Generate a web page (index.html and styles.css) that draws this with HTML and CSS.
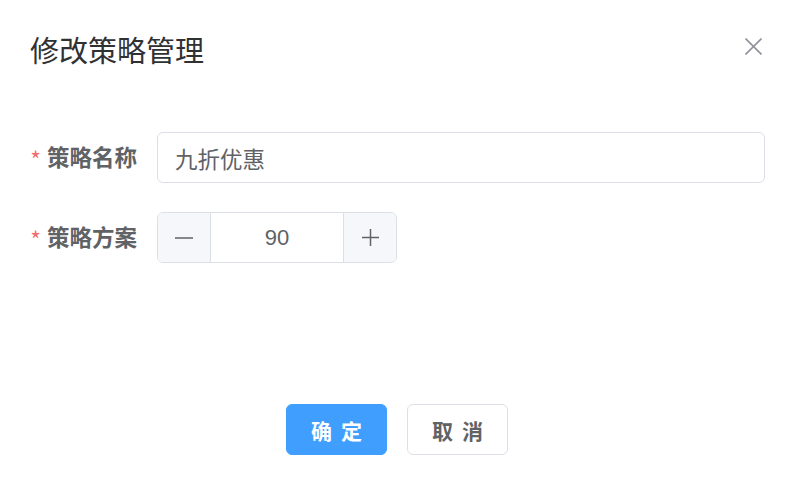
FILE: index.html
```html
<!DOCTYPE html>
<html lang="zh">
<head>
<meta charset="utf-8">
<title>修改策略管理</title>
<link rel="stylesheet" href="styles.css">
</head>
<body>
<div class="dialog">
  <div class="header">
    <span class="title">修改策略管理</span>
    <button class="close" aria-label="关闭">
      <svg width="17" height="17" viewBox="0 0 17 17"><path d="M0.5 0.5 L16.5 16.5 M16.5 0.5 L0.5 16.5" stroke="#909399" stroke-width="1.6" fill="none"/></svg>
    </button>
  </div>
  <div class="body">
    <div class="row">
      <label class="label"><span class="req">*</span>策略名称</label>
      <div class="input">九折优惠</div>
    </div>
    <div class="row">
      <label class="label"><span class="req">*</span>策略方案</label>
      <div class="number">
        <span class="step minus"><svg width="18" height="2" viewBox="0 0 18 2"><path d="M0 1 H18" stroke="#606266" stroke-width="1.6"/></svg></span>
        <span class="value">90</span>
        <span class="step plus"><svg width="17" height="17" viewBox="0 0 17 17"><path d="M0 8.5 H17 M8.5 0 V17" stroke="#606266" stroke-width="1.5"/></svg></span>
      </div>
    </div>
  </div>
  <div class="footer">
    <button class="btn primary">确&nbsp;定</button>
    <button class="btn">取&nbsp;消</button>
  </div>
</div>
</body>
</html>
```
FILE: styles.css
```css
html, body {
  margin: 0;
  padding: 0;
  background: #ffffff;
}
body {
  font-family: "Liberation Sans", "Noto Sans CJK SC", sans-serif;
  color: #606266;
}
.dialog {
  width: 797px;
  height: 477px;
  box-sizing: border-box;
}
.header {
  display: flex;
  justify-content: space-between;
  align-items: center;
  padding: 32px 35px 0 30px;
  height: 34px;
}
.title {
  font-family: "Noto Sans CJK SC", sans-serif;
  font-size: 29px;
  line-height: 34px;
  color: #303133;
}
.close {
  border: 0;
  background: none;
  padding: 0;
  width: 17px;
  height: 17px;
  display: flex;
  margin-top: -5px;
}
.body {
  padding-top: 66px;
  display: flex;
  flex-direction: column;
  gap: 29px;
}
.row {
  display: flex;
  align-items: center;
  height: 51px;
}
.label {
  width: 157px;
  box-sizing: border-box;
  padding-right: 20px;
  text-align: right;
  font-family: "Noto Sans CJK SC", sans-serif;
  font-weight: 700;
  font-size: 22.5px;
  line-height: 30px;
  color: #606266;
}
.req {
  color: #f56c6c;
  margin-right: 6px;
  font-weight: 400;
  font-size: 23px;
  vertical-align: -3px;
}
.input {
  width: 608px;
  height: 51px;
  box-sizing: border-box;
  border: 1px solid #dcdfe6;
  border-radius: 6px;
  padding-left: 17px;
  display: flex;
  align-items: center;
  font-family: "Noto Sans CJK SC", sans-serif;
  font-size: 22.5px;
  color: #606266;
}
.number {
  width: 240px;
  height: 51px;
  box-sizing: border-box;
  border: 1px solid #dcdfe6;
  border-radius: 6px;
  display: flex;
  overflow: hidden;
}
.step {
  width: 52px;
  background: #f5f7fa;
  display: flex;
  align-items: center;
  justify-content: center;
}
.minus {
  border-right: 1px solid #dcdfe6;
}
.plus {
  border-left: 1px solid #dcdfe6;
}
.value {
  flex: 1;
  display: flex;
  align-items: center;
  justify-content: center;
  font-size: 22px;
  color: #606266;
}
.footer {
  display: flex;
  justify-content: center;
  gap: 20px;
  padding-top: 141px;
  padding-right: 3px;
}
.btn {
  width: 101px;
  height: 51px;
  box-sizing: border-box;
  border: 1px solid #dcdfe6;
  border-radius: 6px;
  background: #ffffff;
  font-family: "Noto Sans CJK SC", sans-serif;
  font-weight: 700;
  font-size: 21px;
  color: #606266;
  word-spacing: 4px;
  padding: 0;
}
.btn.primary {
  background: #409eff;
  border-color: #409eff;
  color: #ffffff;
}
```
